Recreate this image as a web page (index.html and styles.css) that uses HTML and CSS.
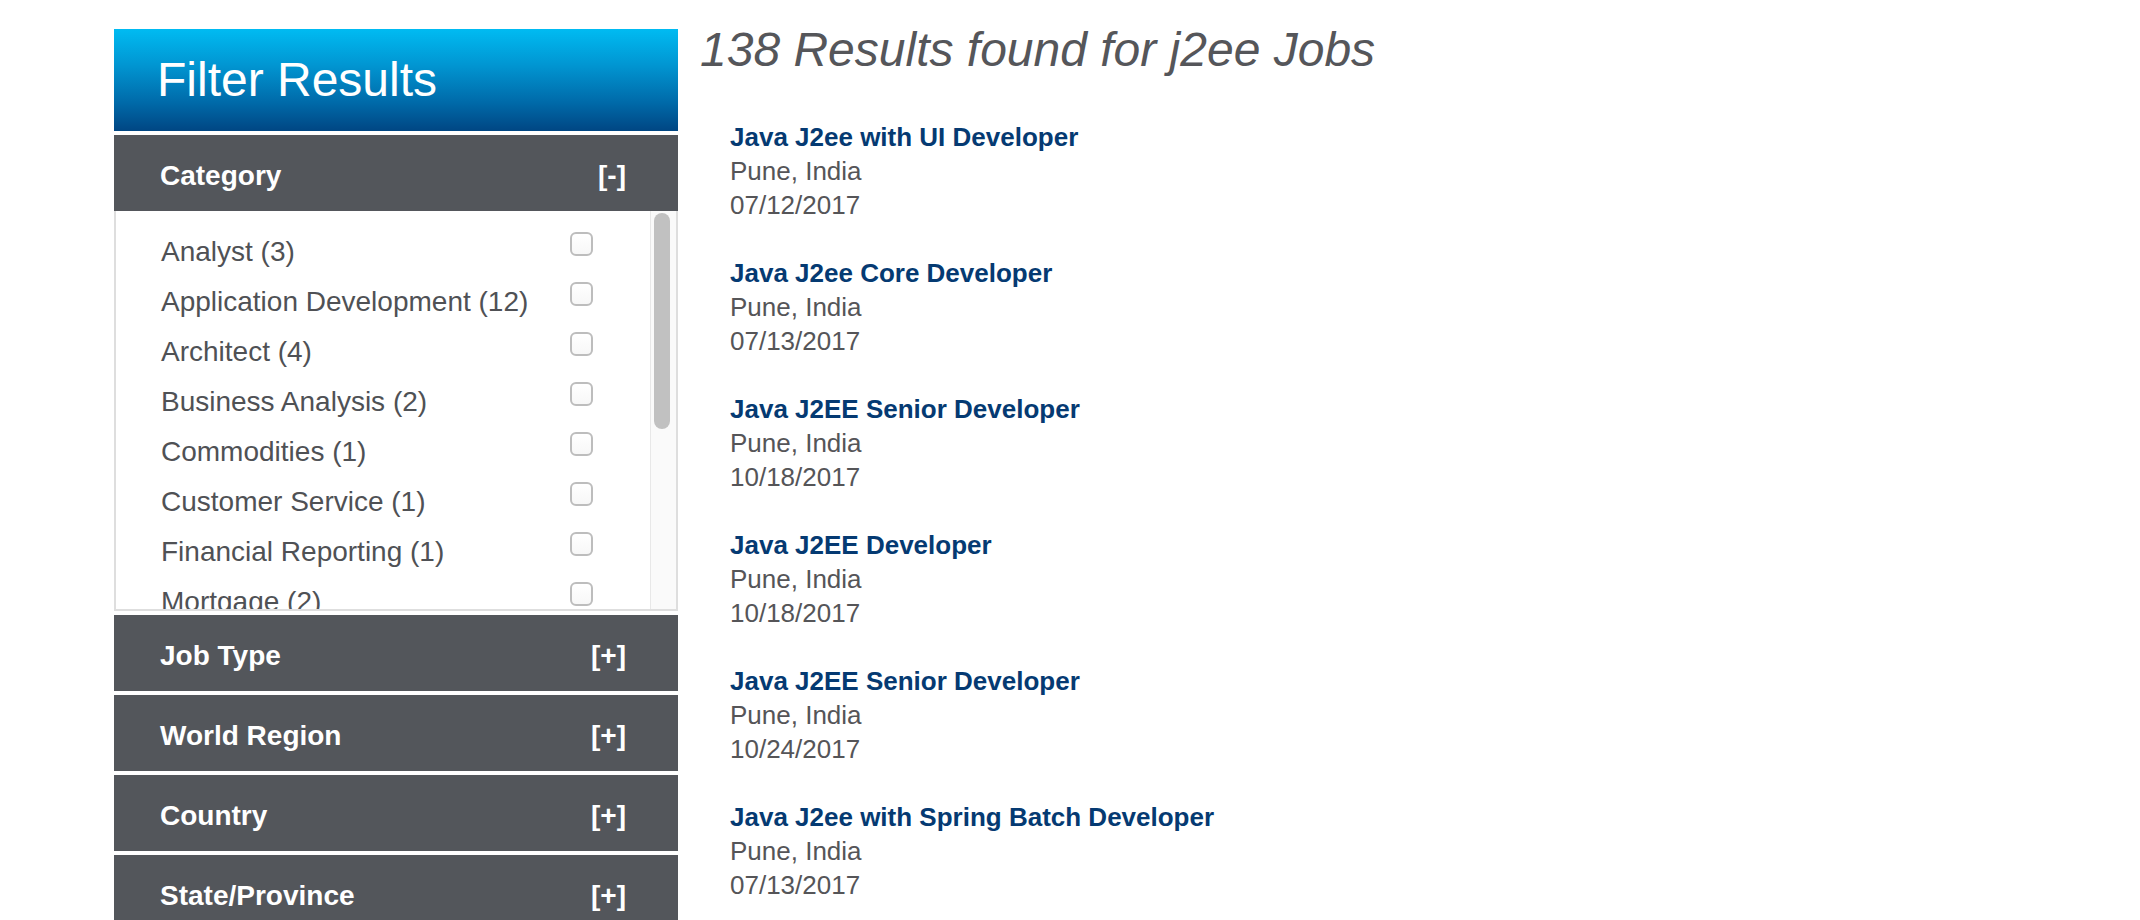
FILE: index.html
```html
<!DOCTYPE html>
<html lang="en">
<head>
<meta charset="utf-8">
<title>Job Search Results</title>
<link rel="stylesheet" href="styles.css">
</head>
<body>
<div class="page">
  <aside class="sidebar">
    <div class="filter-title">Filter Results</div>

    <section class="facet">
      <div class="facet-head"><span>Category</span><span class="toggle">[-]</span></div>
      <div class="facet-body">
        <ul class="facet-list">
          <li><span class="label">Analyst (3)</span><input type="checkbox" class="cb"></li>
          <li><span class="label">Application Development (12)</span><input type="checkbox" class="cb"></li>
          <li><span class="label">Architect (4)</span><input type="checkbox" class="cb"></li>
          <li><span class="label">Business Analysis (2)</span><input type="checkbox" class="cb"></li>
          <li><span class="label">Commodities (1)</span><input type="checkbox" class="cb"></li>
          <li><span class="label">Customer Service (1)</span><input type="checkbox" class="cb"></li>
          <li><span class="label">Financial Reporting (1)</span><input type="checkbox" class="cb"></li>
          <li><span class="label">Mortgage (2)</span><input type="checkbox" class="cb"></li>
        </ul>
        <div class="scrollbar"><div class="thumb"></div></div>
      </div>
    </section>

    <section class="facet">
      <div class="facet-head"><span>Job Type</span><span class="toggle">[+]</span></div>
    </section>
    <section class="facet">
      <div class="facet-head"><span>World Region</span><span class="toggle">[+]</span></div>
    </section>
    <section class="facet">
      <div class="facet-head"><span>Country</span><span class="toggle">[+]</span></div>
    </section>
    <section class="facet">
      <div class="facet-head"><span>State/Province</span><span class="toggle">[+]</span></div>
    </section>
  </aside>

  <main class="results">
    <h1 class="results-title">138 Results found for j2ee Jobs</h1>
    <ul class="jobs">
      <li class="job">
        <a class="job-title" href="#">Java J2ee with UI Developer</a>
        <div class="job-meta">Pune, India</div>
        <div class="job-meta">07/12/2017</div>
      </li>
      <li class="job">
        <a class="job-title" href="#">Java J2ee Core Developer</a>
        <div class="job-meta">Pune, India</div>
        <div class="job-meta">07/13/2017</div>
      </li>
      <li class="job">
        <a class="job-title" href="#">Java J2EE Senior Developer</a>
        <div class="job-meta">Pune, India</div>
        <div class="job-meta">10/18/2017</div>
      </li>
      <li class="job">
        <a class="job-title" href="#">Java J2EE Developer</a>
        <div class="job-meta">Pune, India</div>
        <div class="job-meta">10/18/2017</div>
      </li>
      <li class="job">
        <a class="job-title" href="#">Java J2EE Senior Developer</a>
        <div class="job-meta">Pune, India</div>
        <div class="job-meta">10/24/2017</div>
      </li>
      <li class="job">
        <a class="job-title" href="#">Java J2ee with Spring Batch Developer</a>
        <div class="job-meta">Pune, India</div>
        <div class="job-meta">07/13/2017</div>
      </li>
    </ul>
  </main>
</div>
</body>
</html>
```
FILE: styles.css
```css
html, body {
  margin: 0;
  padding: 0;
  background: #ffffff;
}

body {
  font-family: "Liberation Sans", Arial, Helvetica, sans-serif;
  color: #555558;
}

.page {
  display: flex;
  align-items: flex-start;
  height: 920px;
  overflow: hidden;
  padding: 22px 0 0 114px;
  box-sizing: border-box;
}

/* ---------- Sidebar ---------- */
.sidebar {
  width: 564px;
  flex: 0 0 564px;
  margin-top: 7px;
  display: flex;
  flex-direction: column;
  gap: 4px;
}

.filter-title {
  height: 102px;
  line-height: 102px;
  padding-left: 43px;
  font-size: 48px;
  color: #ffffff;
  background: linear-gradient(to bottom, #00bbf2 0%, #0196d2 35%, #006aa9 72%, #004683 100%);
}

.facet-head {
  height: 76px;
  box-sizing: border-box;
  padding: 6px 52px 0 46px;
  line-height: 70px;
  display: flex;
  justify-content: space-between;
  background: #53565b;
  color: #ffffff;
  font-weight: bold;
  font-size: 28px;
}

.facet-body {
  position: relative;
  height: 400px;
  box-sizing: border-box;
  border: 2px solid #dedede;
  border-top: none;
  overflow: hidden;
  background: #ffffff;
}

.facet-list {
  list-style: none;
  margin: 0;
  padding: 16px 0 0 45px;
}

.facet-list li {
  display: grid;
  grid-template-columns: 409px 23px;
  align-items: start;
  height: 50px;
  line-height: 50px;
  font-size: 28px;
  color: #4f5155;
}

.cb {
  -webkit-appearance: none;
  appearance: none;
  margin: 5px 0 0 0;
  width: 23px;
  height: 24px;
  box-sizing: border-box;
  border: 2px solid #bdbdbd;
  border-radius: 6px;
  background: linear-gradient(to bottom, #ffffff, #f7f7f7);
}

.scrollbar {
  position: absolute;
  top: 0;
  right: 0;
  bottom: 0;
  width: 25px;
  background: #fafafa;
  border-left: 1px solid #e8e8e8;
}

.thumb {
  margin: 2px 0 0 3px;
  width: 16px;
  height: 216px;
  border-radius: 8px;
  background: #c1c1c1;
}

/* ---------- Results ---------- */
.results {
  margin-left: 22px;
}

.results-title {
  margin: 0;
  font-size: 48px;
  line-height: 56px;
  font-style: italic;
  font-weight: normal;
  color: #55565a;
}

.jobs {
  list-style: none;
  margin: 42px 0 0 0;
  padding: 0 0 0 30px;
}

.job {
  margin-bottom: 34px;
  font-size: 26px;
  line-height: 34px;
}

.job-title {
  display: block;
  font-weight: bold;
  color: #053a72;
  text-decoration: none;
}

.job-meta {
  color: #555558;
}
```
